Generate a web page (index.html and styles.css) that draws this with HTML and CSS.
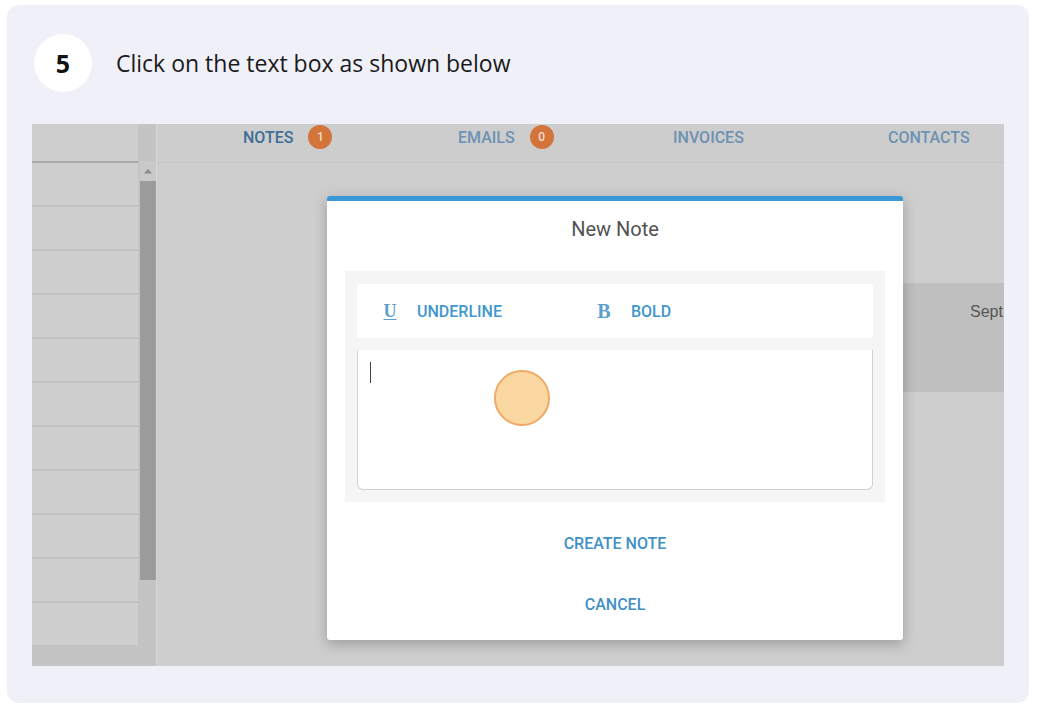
FILE: index.html
```html
<!DOCTYPE html>
<html>
<head>
<meta charset="utf-8">
<link rel="stylesheet" href="styles.css">
</head>
<body>
<div class="card">
  <div class="step">
    <div class="step-num">5</div>
    <div class="step-text">Click on the text box as shown below</div>
  </div>
  <div class="shot">
    <div class="side">
      <div class="side-head"></div>
      <div class="side-body">
        <div class="rows">
          <div class="row"></div><div class="row"></div><div class="row"></div><div class="row"></div>
          <div class="row"></div><div class="row"></div><div class="row"></div><div class="row"></div>
          <div class="row"></div><div class="row"></div><div class="row last"></div>
        </div>
        <div class="scroll">
          <div class="scroll-up"><svg width="10" height="6" viewBox="0 0 10 6"><path d="M1 5.5 L5 1 L9 5.5 Z" fill="#8a8a8a"/></svg></div>
          <div class="scroll-thumb"></div>
        </div>
      </div>
    </div>
    <div class="main">
      <div class="tabs">
        <div class="tab active">NOTES <span class="badge">1</span></div>
        <div class="tab">EMAILS <span class="badge">0</span></div>
        <div class="tab">INVOICES</div>
        <div class="tab">CONTACTS</div>
      </div>
      <div class="content">
        <div class="note-row"><span class="date">Sept</span></div>
      </div>
    </div>

    <div class="modal">
      <div class="modal-title">New Note</div>
      <div class="editor">
        <div class="toolbar">
          <div class="tool"><span class="tool-icon u">U</span><span class="tool-label">UNDERLINE</span></div>
          <div class="tool"><span class="tool-icon">B</span><span class="tool-label">BOLD</span></div>
        </div>
        <div class="textarea"><span class="caret"></span></div>
      </div>
      <div class="btn">CREATE NOTE</div>
      <div class="btn">CANCEL</div>
    </div>
    <div class="click-dot"></div>
  </div>
</div>
</body>
</html>
```
FILE: styles.css
```css
* { box-sizing: border-box; }
html, body { margin: 0; padding: 0; background: #ffffff; }
body { font-family: "Open Sans", "Noto Sans", sans-serif; }

.card {
  margin: 5px 8px 7px 7px;
  width: 1022px;
  height: 698px;
  background: #eff0f8;
  border-radius: 12px;
  padding: 0 25px;
}

.step {
  height: 119px;
  display: flex;
  align-items: center;
  padding-left: 2px;
  padding-bottom: 4px;
}
.step-num {
  width: 58px;
  height: 58px;
  border-radius: 50%;
  background: #ffffff;
  display: flex;
  align-items: center;
  justify-content: center;
  font-weight: 700;
  font-size: 25px;
  color: #111;
}
.step-text {
  margin-left: 24px;
  font-size: 23px;
  color: #1a1a1a;
}

.shot {
  position: relative;
  width: 972px;
  height: 542px;
  display: flex;
  overflow: hidden;
  background: #cecece;
  font-family: Roboto, "Liberation Sans", sans-serif;
}

.side {
  width: 127px;
  display: flex;
  flex-direction: column;
  border-right: 1px solid #d6d6d6;
  background: #c4c4c4;
}
.side-head {
  height: 39px;
  background: #cecece;
  border-bottom: 2px solid #a9a9a9;
  margin-right: 18px;
}
.side-body { display: flex; flex: 1; }
.rows { width: 106px; display: flex; flex-direction: column; }
.row {
  height: 44px;
  background: #cfcfcf;
  border-bottom: 2px solid #c3c3c3;
}
.row.last { height: 42px; border-bottom: none; }
.scroll {
  width: 16px;
  margin-left: 2px;
  display: flex;
  flex-direction: column;
  margin-top: -2px;
}
.scroll-up {
  height: 20px;
  display: flex;
  align-items: center;
  justify-content: center;
  background: #c9c9c9;
}
.scroll-thumb { height: 399px; background: #9b9b9b; }

.main { flex: 1; display: flex; flex-direction: column; }
.tabs {
  height: 39px;
  display: flex;
  padding-left: 86px;
  border-bottom: 1px solid #c4c4c4;
  background: #cdcdcd;
}
.tab {
  flex: 0 0 215px;
  display: flex;
  align-items: center;
  font-weight: 500;
  font-size: 16px;
  color: #6d92b2;
  padding-bottom: 12px;
}
.tab.active { color: #3f6e98; }
.badge {
  width: 24px;
  height: 24px;
  border-radius: 50%;
  background: #d3743a;
  color: #f3dccd;
  font-size: 12px;
  display: inline-flex;
  align-items: center;
  justify-content: center;
  margin-left: 15px;
}
.content { flex: 1; padding-top: 120px; }
.note-row {
  height: 109px;
  background: #bfbfbf;
  margin-left: 740px;
  padding-left: 73px;
  padding-top: 19px;
}
.date { font-family: "Liberation Sans", sans-serif; font-size: 16px; color: #555; white-space: nowrap; }

.modal {
  position: absolute;
  left: 295px;
  top: 72px;
  width: 576px;
  height: 444px;
  background: #ffffff;
  border-top: 5px solid #3a98d6;
  border-radius: 3px;
  box-shadow: 0 4px 14px rgba(0,0,0,0.25);
  display: flex;
  flex-direction: column;
  align-items: center;
}
.modal-title {
  margin-top: 16px;
  line-height: 24px;
  font-size: 20px;
  color: #525252;
}
.editor {
  margin-top: 30px;
  width: 540px;
  height: 231px;
  background: #f5f5f5;
  padding: 13px 12px 12px;
  display: flex;
  flex-direction: column;
}
.toolbar {
  height: 54px;
  background: #ffffff;
  border-radius: 2px;
  display: flex;
  align-items: center;
  padding-left: 26px;
}
.tool { display: flex; align-items: center; }
.tool + .tool { margin-left: 95px; }
.tool-icon {
  font-family: "Liberation Serif", serif;
  font-weight: 700;
  font-size: 20px;
  color: #5c9fcb;
  width: 14px;
  text-align: center;
}
.tool-icon.u { text-decoration: underline; text-decoration-thickness: 1px; text-underline-offset: 2px; font-size: 18px; }
.tool-label {
  margin-left: 20px;
  font-weight: 500;
  font-size: 16px;
  color: #4197cc;
}
.textarea {
  margin-top: 12px;
  height: 140px;
  background: #ffffff;
  border: 1px solid #d2d2d2;
  border-top: none;
  border-radius: 0 0 6px 6px;
  padding: 12px 12px;
}
.caret { display: block; width: 1px; height: 21px; background: #444; }

.btn {
  height: 36px;
  line-height: 36px;
  font-weight: 500;
  font-size: 16px;
  color: #3f91c6;
}
.editor + .btn { margin-top: 24px; }
.modal .btn + .btn { margin-top: 25px; }

.click-dot {
  position: absolute;
  left: 462px;
  top: 246px;
  width: 56px;
  height: 56px;
  border-radius: 50%;
  background: #fbd8a2;
  border: 2px solid #f0a964;
}
```
